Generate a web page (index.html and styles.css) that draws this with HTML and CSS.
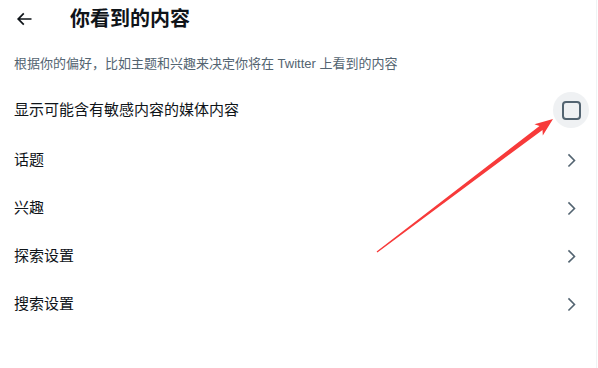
FILE: index.html
```html
<!DOCTYPE html>
<html lang="zh-CN">
<head>
<meta charset="utf-8">
<link rel="stylesheet" href="styles.css">
</head>
<body>
<div class="page">
  <header class="header">
    <button class="back" aria-label="返回">
      <svg viewBox="0 0 24 24" class="back-icon"><path d="M7.414 13l5.043 5.04-1.414 1.42L3.586 12l7.457-7.46 1.414 1.42L7.414 11H21v2H7.414z"/></svg>
    </button>
    <h1 class="title">你看到的内容</h1>
  </header>
  <p class="intro">根据你的偏好，比如主题和兴趣来决定你将在 Twitter 上看到的内容</p>
  <div class="list">
    <div class="row row-check">
      <span class="label">显示可能含有敏感内容的媒体内容</span>
      <span class="slot"><span class="check-hit"><span class="check-box"></span></span></span>
    </div>
    <div class="row">
      <span class="label">话题</span>
      <span class="slot"><svg viewBox="0 0 24 24" class="chev"><path d="M14.586 12L7.543 4.96l1.414-1.42L17.414 12l-8.457 8.46-1.414-1.42L14.586 12z"/></svg></span>
    </div>
    <div class="row">
      <span class="label">兴趣</span>
      <span class="slot"><svg viewBox="0 0 24 24" class="chev"><path d="M14.586 12L7.543 4.96l1.414-1.42L17.414 12l-8.457 8.46-1.414-1.42L14.586 12z"/></svg></span>
    </div>
    <div class="row">
      <span class="label">探索设置</span>
      <span class="slot"><svg viewBox="0 0 24 24" class="chev"><path d="M14.586 12L7.543 4.96l1.414-1.42L17.414 12l-8.457 8.46-1.414-1.42L14.586 12z"/></svg></span>
    </div>
    <div class="row">
      <span class="label">搜索设置</span>
      <span class="slot"><svg viewBox="0 0 24 24" class="chev"><path d="M14.586 12L7.543 4.96l1.414-1.42L17.414 12l-8.457 8.46-1.414-1.42L14.586 12z"/></svg></span>
    </div>
  </div>
  <svg class="annot" viewBox="0 0 598 368" width="598" height="368">
    <polygon points="376.6,251.5 539.5,126.0 534.4,124.3 553,119 542.8,135.5 542.5,130.0 377.4,252.5" fill="#f73a3a"/>
  </svg>
</div>
</body>
</html>
```
FILE: styles.css
```css
* { box-sizing: border-box; }
html, body { margin: 0; padding: 0; background: #fff; }
body {
  font-family: "Liberation Sans", "Noto Sans CJK SC", sans-serif;
  color: #0f1419;
}
.page {
  position: relative;
  width: 597px;
  height: 368px;
  border-right: 1px solid #eff3f4;
}
.header {
  display: flex;
  align-items: center;
  height: 38px;
  padding-left: 6px;
}
.back {
  width: 36px;
  height: 36px;
  border: 0;
  padding: 0;
  background: transparent;
  display: flex;
  align-items: center;
  justify-content: center;
}
.back-icon { width: 20px; height: 20px; fill: #0f1419; }
.title {
  margin: 0 0 0 28px;
  font-size: 20px;
  line-height: 24px;
  font-weight: 700;
}
.intro {
  margin: 0;
  padding: 18px 14px 12px;
  font-size: 13px;
  line-height: 16px;
  color: #536471;
}
.list { display: flex; flex-direction: column; }
.row {
  display: flex;
  align-items: center;
  justify-content: space-between;
  height: 48px;
  padding: 0 15px 0 14px;
  font-size: 15px;
  line-height: 20px;
}
.row-check { height: 52px; }
.slot {
  width: 20px;
  height: 20px;
  display: flex;
  align-items: center;
  justify-content: center;
}
.chev { width: 18.75px; height: 18.75px; fill: #536471; }
.check-hit {
  flex: none;
  width: 36px;
  height: 36px;
  border-radius: 50%;
  background: #eff1f3;
  display: flex;
  align-items: center;
  justify-content: center;
}
.check-box {
  width: 19px;
  height: 19px;
  border: 2px solid #536471;
  border-radius: 4px;
}
.annot {
  position: absolute;
  left: 0;
  top: 0;
  pointer-events: none;
}
```
